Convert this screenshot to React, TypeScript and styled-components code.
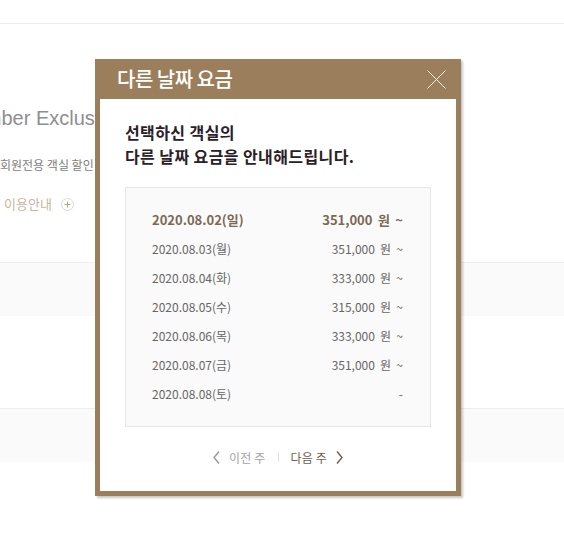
import styled, { createGlobalStyle } from 'styled-components';

const GlobalStyle = createGlobalStyle`
  html, body {
    margin: 0;
    padding: 0;
    background: #fff;
  }
  body {
    font-family: 'Noto Sans CJK KR', 'Noto Sans', sans-serif;
  }
  * {
    box-sizing: border-box;
  }
`;

const rates = [
  { date: '2020.08.02(일)', price: '351,000 원 ~', active: true },
  { date: '2020.08.03(월)', price: '351,000 원 ~' },
  { date: '2020.08.04(화)', price: '333,000 원 ~' },
  { date: '2020.08.05(수)', price: '315,000 원 ~' },
  { date: '2020.08.06(목)', price: '333,000 원 ~' },
  { date: '2020.08.07(금)', price: '351,000 원 ~' },
  { date: '2020.08.08(토)', price: '-' },
];

export default function App() {
  return (
    <>
      <GlobalStyle />
      <Page>
        <TopBar />
        <Intro>
          <IntroTitle>Member Exclusive</IntroTitle>
          <IntroDesc>회원전용 객실 할인 혜택을 만나보세요</IntroDesc>
          <GuideLink>
            이용안내
            <PlusIcon>
              <svg width="13" height="13" viewBox="0 0 13 13">
                <circle cx="6.5" cy="6.5" r="6" fill="none" stroke="#d8d8d8" />
                <path d="M6.5 3.5v6M3.5 6.5h6" stroke="#b5a58f" strokeWidth="1" />
              </svg>
            </PlusIcon>
          </GuideLink>
        </Intro>
        <Band />
        <Gap />
        <Band />
      </Page>

      <Modal>
        <ModalHeader>
          <ModalTitle>다른 날짜 요금</ModalTitle>
          <CloseButton aria-label="닫기">
            <svg width="19" height="19" viewBox="0 0 19 19">
              <path d="M0.5 0.5L18.5 18.5M18.5 0.5L0.5 18.5" stroke="#fbf1dc" strokeWidth="1" />
            </svg>
          </CloseButton>
        </ModalHeader>
        <ModalBody>
          <Lead>
            선택하신 객실의
            <br />
            다른 날짜 요금을 안내해드립니다.
          </Lead>
          <RateBox>
            {rates.map((r) => (
              <RateRow key={r.date} $active={r.active}>
                <span>{r.date}</span>
                <Price>{r.price}</Price>
              </RateRow>
            ))}
          </RateBox>
          <WeekNav>
            <NavButton $tone="prev">
              <svg width="7" height="13" viewBox="0 0 7 13">
                <path d="M6 0.5L1 6.5L6 12.5" fill="none" stroke="#9a9a9a" strokeWidth="1.4" />
              </svg>
              이전 주
            </NavButton>
            <NavDivider />
            <NavButton $tone="next">
              다음 주
              <svg width="7" height="13" viewBox="0 0 7 13">
                <path d="M1 0.5L6 6.5L1 12.5" fill="none" stroke="#6e604f" strokeWidth="1.4" />
              </svg>
            </NavButton>
          </WeekNav>
        </ModalBody>
      </Modal>
    </>
  );
}

const Page = styled.div`
  width: 564px;
  min-height: 552px;
  overflow: hidden;
`;

const TopBar = styled.div`
  height: 24px;
  border-bottom: 1px solid #eeeeee;
`;

const Intro = styled.div`
  padding: 82px 0 49px 4px;
  display: flex;
  flex-direction: column;
  align-items: flex-start;
`;

const IntroTitle = styled.div`
  margin-left: -47px;
  font-family: 'Liberation Sans', Arial, sans-serif;
  font-size: 20px;
  line-height: 24px;
  color: #8e8e8e;
  white-space: nowrap;
`;

const IntroDesc = styled.div`
  margin: 26px 0 0 -4px;
  font-size: 12px;
  line-height: 18px;
  color: #7e7e7e;
  white-space: nowrap;
`;

const GuideLink = styled.div`
  margin-top: 21px;
  display: flex;
  align-items: center;
  gap: 9px;
  font-size: 13px;
  line-height: 18px;
  color: #c8b69e;
`;

const PlusIcon = styled.span`
  display: flex;
`;

const Band = styled.div`
  height: 54px;
  border-top: 1px solid #eeeeee;
  background: #fafafa;
`;

const Gap = styled.div`
  height: 92px;
`;

const Modal = styled.div`
  position: absolute;
  top: 59px;
  left: 95px;
  width: 366px;
  padding: 0 5px 5px;
  background: #9b7f5c;
  box-shadow: 2px 2px 2px rgba(0, 0, 0, 0.22);
`;

const ModalHeader = styled.div`
  height: 40px;
  padding: 0 10px 0 17px;
  display: flex;
  align-items: center;
  justify-content: space-between;
`;

const ModalTitle = styled.h2`
  margin: 0;
  font-size: 20px;
  line-height: 24px;
  font-weight: 500;
  letter-spacing: -0.5px;
  color: #fff;
`;

const CloseButton = styled.button`
  padding: 0;
  border: 0;
  background: none;
  display: flex;
  cursor: pointer;
`;

const ModalBody = styled.div`
  background: #fff;
  padding: 21px 25px 24px;
`;

const Lead = styled.p`
  margin: 0;
  font-size: 16px;
  line-height: 24px;
  font-weight: 700;
  letter-spacing: 0.4px;
  color: #2a2028;
`;

const RateBox = styled.div`
  margin-top: 19px;
  padding: 17px 27px 18px 26px;
  border: 1px solid #e6e6e6;
  background: #fafafa;
`;

const RateRow = styled.div<{ $active?: boolean }>`
  height: 29px;
  display: flex;
  align-items: center;
  justify-content: space-between;
  font-size: ${(p) => (p.$active ? '13px' : '12px')};
  font-weight: ${(p) => (p.$active ? 700 : 400)};
  color: ${(p) => (p.$active ? '#7a6955' : '#666')};
  white-space: pre;
`;

const Price = styled.span`
  word-spacing: 2.5px;
`;

const WeekNav = styled.div`
  margin-top: 20px;
  height: 20px;
  display: flex;
  align-items: center;
  justify-content: center;
`;

const NavButton = styled.span<{ $tone: 'prev' | 'next' }>`
  display: flex;
  align-items: center;
  gap: 9px;
  font-size: 12px;
  letter-spacing: 0.2px;
  color: ${(p) => (p.$tone === 'prev' ? '#a3a3a3' : '#6e604f')};
  cursor: pointer;
`;

const NavDivider = styled.span`
  width: 1px;
  height: 10px;
  margin: 0 12px;
  background: #e2e2e2;
`;
